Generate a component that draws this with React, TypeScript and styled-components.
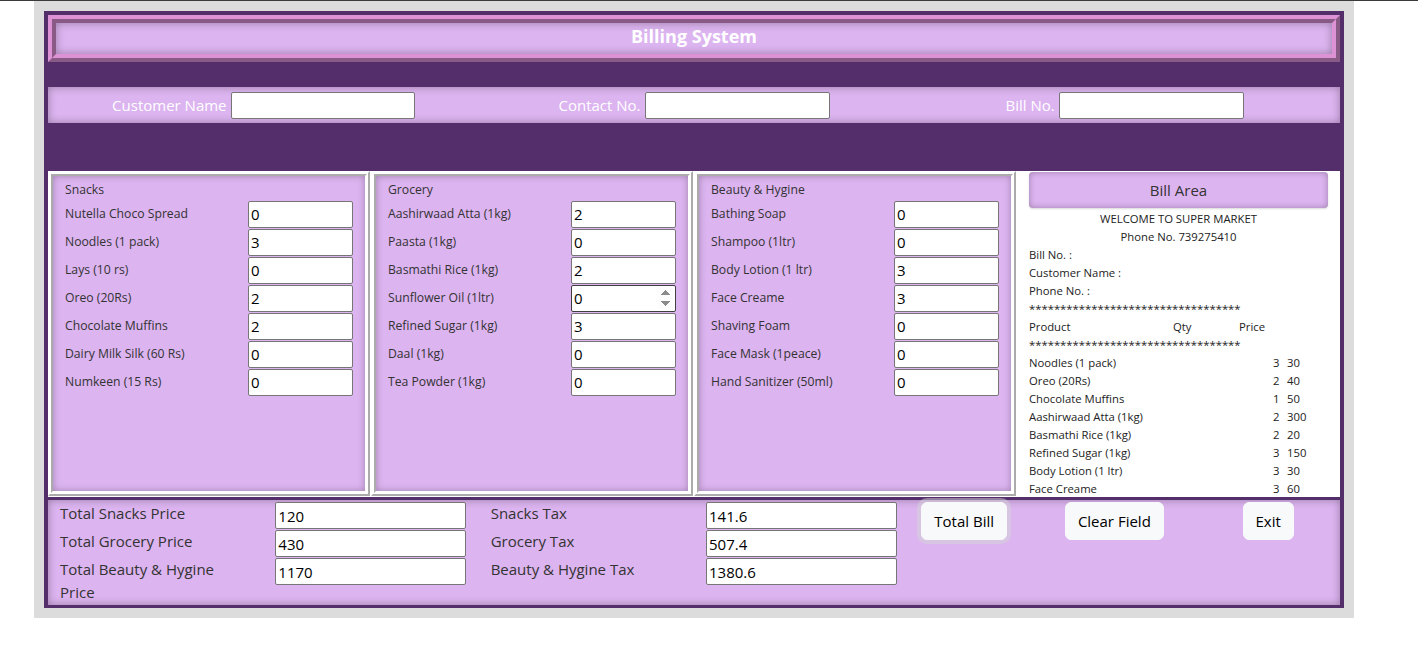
import React from "react";
import styled, { createGlobalStyle } from "styled-components";

const GlobalStyle = createGlobalStyle`
  html, body { margin: 0; padding: 0; background: #ffffff; }
  body {
    border-top: 1px solid #3a3a3a;
    font-family: "Open Sans", "Noto Sans", "DejaVu Sans", sans-serif;
  }
  * { box-sizing: border-box; }
`;

const LAV = "#dcb4f0";
const DARK = "#542e6b";
const SHADOW = "inset 0 0 8px rgba(0, 0, 0, 0.32)";

const Page = styled.div`
  padding-left: 34px;
`;

const Wrapper = styled.div`
  width: 1320px;
  background: #dcdcdc;
  padding: 10px;
`;

const Container = styled.div`
  background: ${DARK};
  padding: 4px 4px 3px;
`;

const Header = styled.div`
  height: 47px;
  border: 8px ridge #dd92d6;
  background: ${LAV};
  box-shadow: ${SHADOW};
  display: flex;
  align-items: center;
  justify-content: center;
  color: #ffffff;
  font-weight: 700;
  font-size: 18px;
  padding-bottom: 5px;
`;

const CustomerRow = styled.div`
  margin-top: 25px;
  height: 36px;
  background: ${LAV};
  box-shadow: ${SHADOW};
  display: grid;
  grid-template-columns: repeat(3, 1fr);
`;

const CustomerField = styled.div`
  display: flex;
  align-items: center;
  justify-content: center;
  gap: 4px;
`;

const CustomerLabel = styled.span`
  color: #ffffff;
  font-size: 15px;
`;

const TextInput = styled.input<{ $w: number; $hover?: boolean }>`
  width: ${(p) => p.$w}px;
  height: 27px;
  border: 1px solid ${(p) => (p.$hover ? "#3f3f3f" : "#767676")};
  border-radius: 2px;
  padding: 1px 2px;
  background: #ffffff;
  color: #000000;
  font-family: "Open Sans", "Noto Sans", sans-serif;
  font-size: 15px;
  outline: none;
  margin: 0;
  &::-webkit-inner-spin-button {
    opacity: 1;
    height: 23px;
  }
`;

const ProductRow = styled.div`
  margin-top: 48px;
  height: 326px;
  background: #ffffff;
  display: grid;
  grid-template-columns: repeat(4, 1fr);
`;

const Frame = styled.div`
  height: 325px;
  margin-right: 1px;
  border: 5px ridge #ffffff;
  background: ${LAV};
  box-shadow: inset 0 0 7px rgba(0, 0, 0, 0.28);
  padding: 4px 12px;
  color: #333333;
  font-size: 12.2px;
`;

const FrameTitle = styled.div`
  height: 20px;
  line-height: 20px;
`;

const ItemRow = styled.div`
  display: grid;
  grid-template-columns: 1fr 105px;
  align-items: center;
  height: 28px;
`;

const ItemLabel = styled.span`
  line-height: 18px;
`;

const BillColumn = styled.div`
  background: #ffffff;
  padding: 1px 12px 0;
  overflow: hidden;
  color: #222222;
  font-size: 11.3px;
`;

const BillHeader = styled.div`
  height: 36px;
  margin-bottom: 2px;
  background: ${LAV};
  border-radius: 4px;
  box-shadow: inset 0 0 6px rgba(0, 0, 0, 0.3), 0 1px 2px rgba(0, 0, 0, 0.15);
  display: flex;
  align-items: center;
  justify-content: center;
  font-size: 15px;
  color: #333333;
`;

const BillLine = styled.div<{ $center?: boolean }>`
  height: 18px;
  line-height: 18px;
  white-space: nowrap;
  display: flex;
  justify-content: ${(p) => (p.$center ? "center" : "flex-start")};
`;

const BillCell = styled.span<{ $w?: number }>`
  display: inline-block;
  width: ${(p) => (p.$w ? `${p.$w}px` : "auto")};
  flex: none;
`;

const Stars = styled.div`
  height: 18px;
  line-height: 18px;
  white-space: nowrap;
  font-size: 11.3px;
`;

const BottomSection = styled.div`
  margin-top: 3px;
  height: 105px;
  background: ${LAV};
  box-shadow: ${SHADOW};
  padding-top: 2px;
  display: grid;
  grid-template-columns: repeat(6, 1fr);
  color: #333333;
  font-size: 15px;
`;

const Col = styled.div<{ $span?: number }>`
  padding: 0 12px;
  grid-column: span ${(p) => p.$span ?? 1};
  min-width: 0;
`;

const TotalLabel = styled.div`
  line-height: 23px;
  margin-bottom: 5px;
`;

const StackInput = styled(TextInput)`
  display: block;
  margin-bottom: 1px;
`;

const ButtonRow = styled.div`
  display: grid;
  grid-template-columns: repeat(3, 1fr);
  margin: 0 -12px;
`;

const ButtonCell = styled.div<{ $center?: boolean }>`
  padding: 0 12px;
  display: flex;
  justify-content: ${(p) => (p.$center ? "center" : "flex-start")};
`;

const Button = styled.button<{ $focus?: boolean }>`
  height: 38px;
  padding: 6px 12px;
  border: 1px solid #f8f9fa;
  border-radius: 6px;
  background: #f8f9fa;
  color: #000000;
  font-family: "Open Sans", "Noto Sans", sans-serif;
  font-size: 15px;
  line-height: 24px;
  white-space: nowrap;
  box-shadow: ${(p) => (p.$focus ? "0 0 0 4px rgba(211, 212, 213, 0.5)" : "none")};
  cursor: pointer;
`;

type Item = { name: string; qty: string; spin?: boolean };

const snacks: Item[] = [
  { name: "Nutella Choco Spread", qty: "0" },
  { name: "Noodles (1 pack)", qty: "3" },
  { name: "Lays (10 rs)", qty: "0" },
  { name: "Oreo (20Rs)", qty: "2" },
  { name: "Chocolate Muffins", qty: "2" },
  { name: "Dairy Milk Silk (60 Rs)", qty: "0" },
  { name: "Numkeen (15 Rs)", qty: "0" },
];

const grocery: Item[] = [
  { name: "Aashirwaad Atta (1kg)", qty: "2" },
  { name: "Paasta (1kg)", qty: "0" },
  { name: "Basmathi Rice (1kg)", qty: "2" },
  { name: "Sunflower Oil (1ltr)", qty: "0", spin: true },
  { name: "Refined Sugar (1kg)", qty: "3" },
  { name: "Daal (1kg)", qty: "0" },
  { name: "Tea Powder (1kg)", qty: "0" },
];

const beauty: Item[] = [
  { name: "Bathing Soap", qty: "0" },
  { name: "Shampoo (1ltr)", qty: "0" },
  { name: "Body Lotion (1 ltr)", qty: "3" },
  { name: "Face Creame", qty: "3" },
  { name: "Shaving Foam", qty: "0" },
  { name: "Face Mask (1peace)", qty: "0" },
  { name: "Hand Sanitizer (50ml)", qty: "0" },
];

const billItems: [string, string, string][] = [
  ["Noodles (1 pack)", "3", "30"],
  ["Oreo (20Rs)", "2", "40"],
  ["Chocolate Muffins", "1", "50"],
  ["Aashirwaad Atta (1kg)", "2", "300"],
  ["Basmathi Rice (1kg)", "2", "20"],
  ["Refined Sugar (1kg)", "3", "150"],
  ["Body Lotion (1 ltr)", "3", "30"],
  ["Face Creame", "3", "60"],
];

const STARS = "*".repeat(34);

function ProductFrame({ title, items }: { title: string; items: Item[] }) {
  return (
    <Frame>
      <FrameTitle>{title}</FrameTitle>
      {items.map((it) => (
        <ItemRow key={it.name}>
          <ItemLabel>{it.name}</ItemLabel>
          <TextInput
            $w={105}
            $hover={it.spin}
            type={it.spin ? "number" : "text"}
            defaultValue={it.qty}
          />
        </ItemRow>
      ))}
    </Frame>
  );
}

export default function App() {
  return (
    <>
      <GlobalStyle />
      <Page>
        <Wrapper>
          <Container>
            <Header>Billing System</Header>
            <CustomerRow>
              <CustomerField>
                <CustomerLabel>Customer Name</CustomerLabel>
                <TextInput $w={184} type="text" />
              </CustomerField>
              <CustomerField>
                <CustomerLabel>Contact No.</CustomerLabel>
                <TextInput $w={185} type="text" />
              </CustomerField>
              <CustomerField>
                <CustomerLabel>Bill No.</CustomerLabel>
                <TextInput $w={185} type="text" />
              </CustomerField>
            </CustomerRow>
            <ProductRow>
              <ProductFrame title="Snacks" items={snacks} />
              <ProductFrame title="Grocery" items={grocery} />
              <ProductFrame title="Beauty & Hygine" items={beauty} />
              <BillColumn>
                <BillHeader>Bill Area</BillHeader>
                <BillLine $center>WELCOME TO SUPER MARKET</BillLine>
                <BillLine $center>Phone No. 739275410</BillLine>
                <BillLine>Bill No. :</BillLine>
                <BillLine>Customer Name :</BillLine>
                <BillLine>Phone No. :</BillLine>
                <Stars>{STARS}</Stars>
                <BillLine>
                  <BillCell $w={144}>Product</BillCell>
                  <BillCell $w={66}>Qty</BillCell>
                  <BillCell>Price</BillCell>
                </BillLine>
                <Stars>{STARS}</Stars>
                {billItems.map(([n, q, pr]) => (
                  <BillLine key={n}>
                    <BillCell $w={244}>{n}</BillCell>
                    <BillCell $w={14}>{q}</BillCell>
                    <BillCell>{pr}</BillCell>
                  </BillLine>
                ))}
              </BillColumn>
            </ProductRow>
            <BottomSection>
              <Col>
                <TotalLabel>Total Snacks Price</TotalLabel>
                <TotalLabel>Total Grocery Price</TotalLabel>
                <TotalLabel>Total Beauty &amp; Hygine Price</TotalLabel>
              </Col>
              <Col>
                <StackInput $w={191} type="text" defaultValue="120" />
                <StackInput $w={191} type="text" defaultValue="430" />
                <StackInput $w={191} type="text" defaultValue="1170" />
              </Col>
              <Col>
                <TotalLabel>Snacks Tax</TotalLabel>
                <TotalLabel>Grocery Tax</TotalLabel>
                <TotalLabel>Beauty &amp; Hygine Tax</TotalLabel>
              </Col>
              <Col>
                <StackInput $w={191} type="text" defaultValue="141.6" />
                <StackInput $w={191} type="text" defaultValue="507.4" />
                <StackInput $w={191} type="text" defaultValue="1380.6" />
              </Col>
              <Col $span={2}>
                <ButtonRow>
                  <ButtonCell>
                    <Button $focus>Total Bill</Button>
                  </ButtonCell>
                  <ButtonCell>
                    <Button>Clear Field</Button>
                  </ButtonCell>
                  <ButtonCell $center>
                    <Button>Exit</Button>
                  </ButtonCell>
                </ButtonRow>
              </Col>
            </BottomSection>
          </Container>
        </Wrapper>
      </Page>
    </>
  );
}
